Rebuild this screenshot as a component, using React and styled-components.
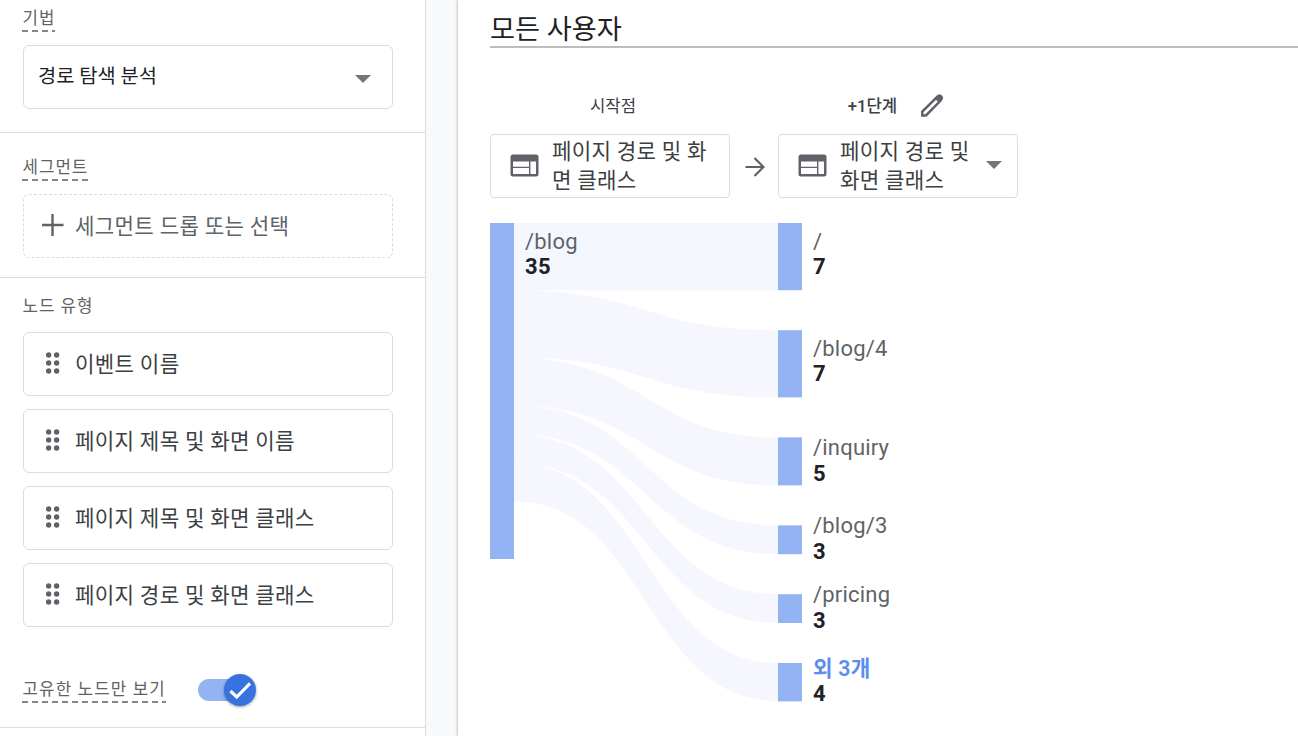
import React from 'react';
import styled, { createGlobalStyle, css } from 'styled-components';

const GlobalStyle = createGlobalStyle`
  * {
    box-sizing: border-box;
  }

  body {
    margin: 0;
    background: #fff;
    font-family: Roboto, 'Noto Sans CJK KR', sans-serif;
    color: #3c4043;
    overflow: hidden;
  }

  svg {
    display: block;
    flex: none;
  }
`;

const Page = styled.div`
  display: flex;
  height: 736px;
  overflow: hidden;
`;

const Sidebar = styled.aside`
  flex: none;
  width: 426px;
  border-right: 1px solid #dadce0;
  background: #fff;
`;

const Section = styled.section`
  height: ${props => props.height}px;
  padding: ${props => props.top}px 32px 0 23px;
  border-bottom: 1px solid #dadce0;
`;

const Label = styled.div`
  width: max-content;
  height: 24px;
  margin-left: -1px;
  padding-left: 0.5px;
  line-height: 25px;
  font-size: 16.8px;
  letter-spacing: 1px;
  color: #5f6368;
  white-space: nowrap;
  ${props =>
    props.dashed &&
    css`
      height: 26px;
      background: repeating-linear-gradient(
          90deg,
          #80868b 0 6px,
          transparent 6px 10px
        )
        0 100% / 100% 2px no-repeat;
    `}
`;

const Field = styled.div`
  display: flex;
  align-items: center;
  width: 370px;
  height: 64px;
  margin-top: ${props => props.gap}px;
  padding-top: 2px;
  border: 1px ${props => (props.dashed ? 'dashed' : 'solid')} #dadce0;
  border-radius: 6px;
  font-size: 21.2px;
  letter-spacing: 0.28px;
  line-height: 30px;
  white-space: nowrap;
  color: ${props => (props.dashed ? '#5f6368' : '#3c4043')};
`;

const SelectField = styled(Field)`
  justify-content: space-between;
  padding: 4px 21px 0 14px;
  font-size: 19.8px;
  letter-spacing: 0;
  color: #202124;
`;

const SelectText = styled.span`
  padding-bottom: 5px;
`;

const FieldIcon = styled.span`
  display: flex;
  justify-content: center;
  width: 22px;
  margin: 0 11px 4px 18px;
`;

const ToggleRow = styled.div`
  display: flex;
  align-items: center;
  margin-top: 47px;
`;

const ToggleLabel = styled(Label)`
  height: 29px;
  padding-top: 3px;
  letter-spacing: 1.15px;
`;

const Track = styled.span`
  display: flex;
  align-items: center;
  width: 52px;
  height: 22px;
  margin: 3px 0 0 32px;
  padding-left: 26px;
  border-radius: 11px;
  background: #93b3f3;
`;

const Thumb = styled.span`
  display: flex;
  flex: none;
  align-items: center;
  justify-content: center;
  width: 32px;
  height: 32px;
  border-radius: 50%;
  background: #3871e0;
  box-shadow: 0 1px 3px rgba(0, 0, 0, 0.4);
`;

const Gutter = styled.div`
  flex: none;
  width: 32px;
  background: #f8f9fb;
`;

const Canvas = styled.main`
  flex: 1;
  min-width: 0;
  padding: 10px 0 0 32px;
  background: #fff;
  box-shadow: 0 0 3px rgba(60, 64, 67, 0.5);
`;

const Title = styled.h1`
  height: 38px;
  margin: 0;
  border-bottom: 2px solid #bdbdbd;
  font-size: 27.2px;
  font-weight: 400;
  line-height: 40px;
  color: #202124;
`;

const Steps = styled.div`
  display: flex;
  margin-top: 41px;
`;

const Step = styled.div`
  width: 240px;
`;

const StepHead = styled.div`
  display: flex;
  align-items: center;
  justify-content: center;
  height: 32px;
  margin-bottom: 13px;
  padding-left: ${props => (props.editable ? 0 : 6)}px;
  padding-right: ${props => (props.editable ? 4 : 0)}px;
  gap: 23px;
  font-size: 16.7px;
  font-weight: ${props => (props.editable ? 500 : 400)};

  svg {
    margin-top: 2px;
  }
`;

const StepBox = styled.div`
  display: flex;
  align-items: center;
  height: 64px;
  padding: 0 15px 0 19px;
  border: 1px solid #dadce0;
  border-radius: 4px;

  svg {
    margin-bottom: 2px;
  }
`;

const StepText = styled.span`
  flex: none;
  width: ${props => props.width}px;
  margin-left: 13px;
  padding-bottom: 1px;
  font-size: 21.2px;
  letter-spacing: 0.25px;
  line-height: 29px;
  white-space: pre;
`;

const ArrowSlot = styled.div`
  display: flex;
  justify-content: center;
  width: 48px;
  padding: 68px 0 0 1px;
`;

const Chart = styled.svg`
  margin-top: 25px;
  overflow: visible;
`;

const NodeName = styled.text`
  font-size: ${props => (props.$more ? 21.3 : 22)}px;
  letter-spacing: 0.2px;
  fill: ${props => (props.$more ? '#5a8dee' : '#5f6368')};
  font-weight: ${props => (props.$more ? 600 : 400)};
`;

const NodeCount = styled.text`
  font-size: 22px;
  font-weight: 700;
  letter-spacing: 0.3px;
  fill: #202124;
`;

const NODE_TYPES = [
  '이벤트 이름',
  '페이지 제목 및 화면 이름',
  '페이지 제목 및 화면 클래스',
  '페이지 경로 및 화면 클래스',
];

const TARGETS = [
  { name: '/', count: 7 },
  { name: '/blog/4', count: 7 },
  { name: '/inquiry', count: 5 },
  { name: '/blog/3', count: 3 },
  { name: '/pricing', count: 3 },
  { name: '외 3개', count: 4, more: true },
];

const UNIT = 9.6;
const NODE_GAP = 40;
const NODE_WIDTH = 24;
const TARGET_X = 288;

// stack the targets on the right and their slices of the source on the left
const flows = TARGETS.reduce((list, target) => {
  const prev = list[list.length - 1];
  return list.concat({
    ...target,
    height: target.count * UNIT,
    from: prev ? prev.from + prev.height : 0,
    to: prev ? prev.to + prev.height + NODE_GAP : 0,
  });
}, []);

const linkPath = ({ from, to, height }) => {
  const mid = (NODE_WIDTH + TARGET_X) / 2;
  return [
    `M${NODE_WIDTH} ${from}`,
    `C${mid} ${from} ${mid} ${to} ${TARGET_X} ${to}`,
    `V${to + height}`,
    `C${mid} ${to + height} ${mid} ${from + height} ${NODE_WIDTH} ${from +
      height}Z`,
  ].join('');
};

// labels start at the top of tall nodes and are centred on the short ones
const labelY = ({ to, height }) =>
  height > 60 ? to + 26 : to + height / 2 - 6;

const Caret = () => (
  <svg width="16" height="8" viewBox="0 0 16 8">
    <path d="M0 0h16L8 8z" fill="#757575" />
  </svg>
);

const PlusIcon = () => (
  <svg width="22" height="22" viewBox="0 0 22 22">
    <path d="M10.5 0v22M0 11h21.5" stroke="#5f6368" strokeWidth="2.4" />
  </svg>
);

const DragIcon = () => (
  <svg width="14" height="22" viewBox="0 0 14 22" fill="#5f6368">
    {[3, 11, 19].map(y => (
      <React.Fragment key={y}>
        <circle cx="2.6" cy={y} r="2.7" />
        <circle cx="10.6" cy={y} r="2.7" />
      </React.Fragment>
    ))}
  </svg>
);

const CheckIcon = () => (
  <svg width="24" height="20" viewBox="0 0 24 20" fill="none">
    <path d="M2.5 11l6.2 6L22 3.3" stroke="#fff" strokeWidth="3.2" />
  </svg>
);

const WebIcon = () => (
  <svg width="29" height="23" viewBox="0 0 29 23">
    <path
      fillRule="evenodd"
      fill="#5f6368"
      d="M3 .5h23a2.5 2.5 0 0 1 2.5 2.5v17a2.5 2.5 0 0 1-2.5 2.5H3A2.5 2.5 0 0 1 .5 20V3A2.5 2.5 0 0 1 3 .5zM3 7.5v5.2h16V7.5zM3 13.9V20h16v-6.1zM20.4 7.5V20H26V7.5z"
    />
  </svg>
);

const ArrowIcon = () => (
  <svg width="20" height="20" viewBox="0 0 20 20" fill="none">
    <path
      d="M0.5 10h18M9.5 1l9 9-9 9"
      stroke="#5f6368"
      strokeWidth="2.2"
    />
  </svg>
);

const PencilIcon = () => (
  <svg width="24" height="24" viewBox="0 0 24 24" fill="none">
    <path
      d="M2.3 21.4v-3.8L17 3l3.6 3.6L6 21.4z"
      stroke="#5f6368"
      strokeWidth="2.5"
    />
    <path
      d="M14.5 4.2l2.9-2.9a3 3 0 0 1 4.2 0l.5.5a3 3 0 0 1 0 4.2l-2.9 2.9z"
      fill="#5f6368"
    />
  </svg>
);

const PathChart = () => (
  <Chart width="440" height="500" viewBox="0 0 440 500">
    {flows.map((flow, index) => (
      <path
        key={flow.name}
        d={linkPath(flow)}
        fill={index === 0 ? '#f4f7fe' : '#f6f7fe'}
      />
    ))}
    <rect width={NODE_WIDTH} height={35 * UNIT} fill="#93b3f3" />
    <NodeName x="35" y="26">
      /blog
    </NodeName>
    <NodeCount x="35" y="51">
      35
    </NodeCount>
    {flows.map(flow => (
      <g key={flow.name}>
        <rect
          x={TARGET_X}
          y={flow.to}
          width={NODE_WIDTH}
          height={flow.height}
          fill="#93b3f3"
        />
        <NodeName x="323" y={Math.floor(labelY(flow))} $more={flow.more}>
          {flow.name}
        </NodeName>
        <NodeCount x="323" y={Math.floor(labelY(flow) + 25.7)}>
          {flow.count}
        </NodeCount>
      </g>
    ))}
  </Chart>
);

const App = () => (
  <>
    <GlobalStyle />
    <Page>
      <Sidebar>
        <Section height={133} top={6}>
          <Label dashed>기법</Label>
          <SelectField gap={13}>
            <SelectText>경로 탐색 분석</SelectText>
            <Caret />
          </SelectField>
        </Section>
        <Section height={145} top={22}>
          <Label dashed>세그먼트</Label>
          <Field gap={13} dashed>
            <FieldIcon>
              <PlusIcon />
            </FieldIcon>
            세그먼트 드롭 또는 선택
          </Field>
        </Section>
        <Section height={450} top={16}>
          <Label>노드 유형</Label>
          {NODE_TYPES.map((type, index) => (
            <Field key={type} gap={index === 0 ? 14 : 13}>
              <FieldIcon>
                <DragIcon />
              </FieldIcon>
              {type}
            </Field>
          ))}
          <ToggleRow>
            <ToggleLabel dashed>고유한 노드만 보기</ToggleLabel>
            <Track>
              <Thumb>
                <CheckIcon />
              </Thumb>
            </Track>
          </ToggleRow>
        </Section>
      </Sidebar>
      <Gutter />
      <Canvas>
        <Title>모든 사용자</Title>
        <Steps>
          <Step>
            <StepHead>시작점</StepHead>
            <StepBox>
              <WebIcon />
              <StepText width={165}>{'페이지 경로 및 화\n면 클래스'}</StepText>
            </StepBox>
          </Step>
          <ArrowSlot>
            <ArrowIcon />
          </ArrowSlot>
          <Step>
            <StepHead editable>
              +1단계
              <PencilIcon />
            </StepHead>
            <StepBox>
              <WebIcon />
              <StepText width={146}>{'페이지 경로 및\n화면 클래스'}</StepText>
              <Caret />
            </StepBox>
          </Step>
        </Steps>
        <PathChart />
      </Canvas>
    </Page>
  </>
);

export default App;
